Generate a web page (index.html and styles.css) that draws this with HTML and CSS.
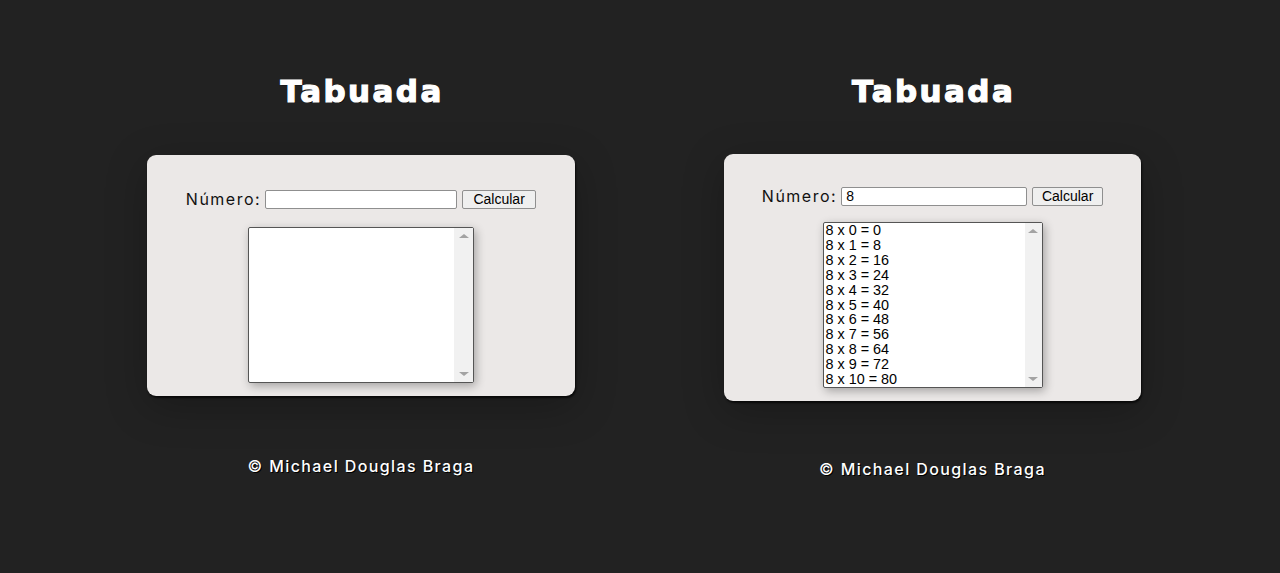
FILE: index.html
```html
<!DOCTYPE html>
<html lang="pt-BR">
<head>
<meta charset="utf-8">
<title>Tabuada</title>
<link rel="stylesheet" href="styles.css">
</head>
<body>
<main class="stage">
  <section class="app app-a">
    <h1 class="title">Tabuada</h1>
    <div class="card">
      <div class="form-row">
        <label class="label">Número:</label>
        <div class="input"></div>
        <div class="btn">Calcular</div>
      </div>
      <div class="listbox">
        <div class="items"></div>
        <div class="scrollbar"><span class="arrow up"></span><span class="arrow down"></span></div>
      </div>
    </div>
    <p class="footer">© Michael Douglas Braga</p>
  </section>
  <section class="app app-b">
    <h1 class="title">Tabuada</h1>
    <div class="card">
      <div class="form-row">
        <label class="label">Número:</label>
        <div class="input">8</div>
        <div class="btn">Calcular</div>
      </div>
      <div class="listbox">
        <div class="items">
          <div>8 x 0 = 0</div>
          <div>8 x 1 = 8</div>
          <div>8 x 2 = 16</div>
          <div>8 x 3 = 24</div>
          <div>8 x 4 = 32</div>
          <div>8 x 5 = 40</div>
          <div>8 x 6 = 48</div>
          <div>8 x 7 = 56</div>
          <div>8 x 8 = 64</div>
          <div>8 x 9 = 72</div>
          <div>8 x 10 = 80</div>
        </div>
        <div class="scrollbar"><span class="arrow up"></span><span class="arrow down"></span></div>
      </div>
    </div>
    <p class="footer">© Michael Douglas Braga</p>
  </section>
</main>
</body>
</html>
```
FILE: styles.css
```css
* { box-sizing: border-box; }
html, body { margin: 0; padding: 0; }
body {
  background: #222222;
  width: 1280px;
  height: 573px;
  overflow: hidden;
  font-family: Inter, "Noto Sans", sans-serif;
}
.stage {
  display: flex;
  align-items: flex-start;
  padding-left: 147px;
  gap: 149px;
}
.app {
  display: flex;
  flex-direction: column;
  align-items: center;
}
.app-a { width: 428px; }
.app-b { width: 417px; }

.title {
  margin: 74px 0 0;
  color: #fff;
  font-family: "DejaVu Sans", sans-serif;
  font-weight: 700;
  font-size: 31px;
  line-height: 34px;
  letter-spacing: 2.4px;
  text-indent: 2.4px;
  -webkit-text-stroke: 1.2px #fff;
  text-shadow: 1px 1px 0 #000;
}
.card {
  width: 100%;
  background: #ebe8e7;
  border-radius: 9px;
  box-shadow: 1px 2px 2px rgba(0,0,0,0.7), 0 10px 40px rgba(0,0,0,0.25);
  display: flex;
  flex-direction: column;
  align-items: center;
}
.app-a .card { margin-top: 47px; height: 241px; padding-top: 34px; }
.app-b .card { margin-top: 46px; height: 247px; padding-top: 32px; }

.form-row {
  display: flex;
  align-items: center;
}
.label {
  font-family: Inter, sans-serif;
  font-size: 16px;
  color: #111;
  letter-spacing: 1.5px;
  margin-right: 4px;
}
.input {
  height: 19px;
  background: #fff;
  border: 1px solid #8f8f8f;
  border-radius: 2px;
  font-family: "Liberation Sans", Arial, sans-serif;
  font-size: 14px;
  line-height: 17px;
  padding-left: 4px;
  color: #000;
}
.app-a .input { width: 192px; }
.app-b .input { width: 186px; }
.btn {
  height: 19px;
  margin-left: 5px;
  background: #efefef;
  border: 1px solid #8f8f8f;
  border-radius: 2px;
  font-family: "Liberation Sans", Arial, sans-serif;
  font-size: 14px;
  line-height: 17px;
  color: #000;
  display: flex;
  align-items: center;
  justify-content: center;
}
.app-a .btn { width: 74px; }
.app-b .btn { width: 71px; }

.listbox {
  display: flex;
  background: #fff;
  border: 1px solid #555;
  border-radius: 2px;
  box-shadow: 2px 3px 10px rgba(0,0,0,0.3);
}
.app-a .listbox { width: 226px; height: 156px; margin-top: 18px; }
.app-b .listbox { width: 220px; height: 166px; margin-top: 16px; }
.items {
  flex: 1;
  font-family: "Liberation Sans", Arial, sans-serif;
  font-size: 14.4px;
  line-height: 14.9px;
  color: #000;
  padding: 0 0 0 2px;
}
.scrollbar {
  width: 19px;
  background: #f1f1f1;
  position: relative;
}
.app-b .scrollbar { width: 17px; }
.arrow {
  position: absolute;
  left: 50%;
  width: 0;
  height: 0;
  margin-left: -5px;
  border-left: 5px solid transparent;
  border-right: 5px solid transparent;
}
.arrow.up { top: 6px; border-bottom: 4px solid #a3a3a3; }
.arrow.down { bottom: 6px; border-top: 4px solid #a3a3a3; }

.footer {
  margin: 0;
  color: #fff;
  font-family: Inter, sans-serif;
  font-weight: 500;
  font-size: 16px;
  line-height: 18px;
  letter-spacing: 1.4px;
  text-shadow: 1px 1px 0 #000;
}
.app-a .footer { margin-top: 61px; }
.app-b .footer { margin-top: 59px; }
```
